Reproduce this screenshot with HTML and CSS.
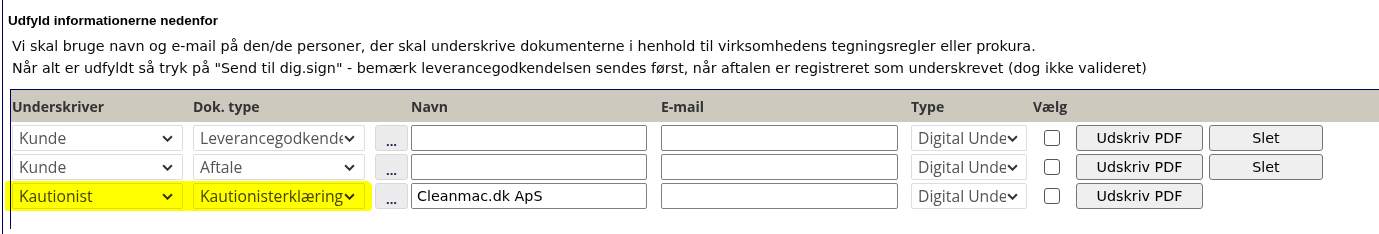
FILE: index.html
```html
<!DOCTYPE html>
<html lang="da">
<head>
  <meta charset="UTF-8" />
  <title>Underskrivere</title>
  <link rel="stylesheet" href="styles.css">
</head>
<body>
  <div class="frame">
    <div class="title">Udfyld informationerne nedenfor</div>
    <div class="intro">
      <p>Vi skal bruge navn og e-mail på den/de personer, der skal underskrive dokumenterne i henhold til virksomhedens tegningsregler eller prokura.</p>
      <p>Når alt er udfyldt så tryk på "Send til dig.sign" - bemærk leverancegodkendelsen sendes først, når aftalen er registreret som underskrevet (dog ikke valideret)</p>
    </div>

    <div class="signers">
      <div class="row head">
        <div>Underskriver</div>
        <div>Dok. type</div>
        <div></div>
        <div>Navn</div>
        <div>E-mail</div>
        <div>Type</div>
        <div>Vælg</div>
        <div></div>
        <div></div>
      </div>

      <div class="row">
        <div class="select w1"><span>Kunde</span><svg viewBox="0 0 10 6"><path d="M1 1l4 4 4-4"/></svg></div>
        <div class="select w2"><span>Leverancegodkendelse</span><svg viewBox="0 0 10 6"><path d="M1 1l4 4 4-4"/></svg></div>
        <button class="dots">...</button>
        <input class="text" type="text">
        <input class="text" type="text">
        <div class="select w3"><span>Digital Underskrift</span><svg viewBox="0 0 10 6"><path d="M1 1l4 4 4-4"/></svg></div>
        <div class="check"><input type="checkbox"></div>
        <button class="btn pdf">Udskriv PDF</button>
        <button class="btn del">Slet</button>
      </div>

      <div class="row">
        <div class="select w1"><span>Kunde</span><svg viewBox="0 0 10 6"><path d="M1 1l4 4 4-4"/></svg></div>
        <div class="select w2"><span>Aftale</span><svg viewBox="0 0 10 6"><path d="M1 1l4 4 4-4"/></svg></div>
        <button class="dots">...</button>
        <input class="text" type="text">
        <input class="text" type="text">
        <div class="select w3"><span>Digital Underskrift</span><svg viewBox="0 0 10 6"><path d="M1 1l4 4 4-4"/></svg></div>
        <div class="check"><input type="checkbox"></div>
        <button class="btn pdf">Udskriv PDF</button>
        <button class="btn del">Slet</button>
      </div>

      <div class="row marked">
        <div class="select w1 dark"><span>Kautionist</span><svg viewBox="0 0 10 6"><path d="M1 1l4 4 4-4"/></svg></div>
        <div class="select w2 dark"><span>Kautionisterklæring</span><svg viewBox="0 0 10 6"><path d="M1 1l4 4 4-4"/></svg></div>
        <button class="dots">...</button>
        <input class="text" type="text" value="Cleanmac.dk ApS">
        <input class="text" type="text">
        <div class="select w3"><span>Digital Underskrift</span><svg viewBox="0 0 10 6"><path d="M1 1l4 4 4-4"/></svg></div>
        <div class="check"><input type="checkbox"></div>
        <button class="btn pdf">Udskriv PDF</button>
        <div></div>
        <div class="highlight"></div>
      </div>
    </div>
  </div>
</body>
</html>
```

FILE: styles.css
```css
* { margin: 0; padding: 0; box-sizing: border-box; }

body {
  background: #fff;
  font-family: "DejaVu Sans", Verdana, sans-serif;
  font-size: 14.3px;
  color: #111;
  overflow: hidden;
}

.frame {
  margin-left: 2px;
  border-left: 1px solid #00005a;
  padding-left: 5px;
  min-height: 234px;
}

.title {
  padding-top: 11px;
  line-height: 20px;
  font-family: "Liberation Sans", Arial, sans-serif;
  font-size: 13.5px;
  font-weight: bold;
  color: #000;
}

.intro {
  margin-top: 4px;
  padding-left: 4px;
  line-height: 22px;
  color: #0a0a0a;
}

.signers {
  margin-top: 10px;
  margin-left: 2px;
  border-top: 1px solid #00005a;
  border-left: 1px solid #00005a;
  padding-left: 1px;
  min-height: 140px;
}

.row {
  display: grid;
  grid-template-columns: 181px 182px 36px 250px 250px 122px 43px 133px 114px;
  align-items: center;
  margin-top: 3px;
  height: 26px;
  position: relative;
}

.row.head {
  margin-top: 0;
  margin-left: -1px;
  padding-left: 1px;
  height: 32px;
  background: #cdc9be;
  font-family: "Open Sans", sans-serif;
  font-size: 14px;
  font-weight: bold;
  color: #333;
}

.select {
  display: flex;
  align-items: center;
  height: 26px;
  border: 1px solid #dedede;
  border-radius: 2px;
  background: #fff;
  padding: 0 9px 0 6px;
  font-family: "Open Sans", sans-serif;
  font-size: 15.7px;
  color: #555;
}

.select span {
  flex: 1;
  overflow: hidden;
  white-space: nowrap;
}

.select svg {
  width: 11px;
  height: 7px;
  margin-left: 1px;
  fill: none;
  stroke: #333;
  stroke-width: 1.8;
}

.select.dark { color: #444; }

.w1 { width: 171px; }
.w2 { width: 172px; }
.w3 { width: 116px; padding-right: 8px; }

.dots {
  width: 33px;
  height: 26px;
  border: 1px solid #d8d8d8;
  border-radius: 3px;
  background: #ececec;
  font-family: "Open Sans", sans-serif;
  font-size: 13px;
  font-weight: bold;
  color: #1a1a40;
  padding-top: 5px;
}

.text {
  width: 236px;
  height: 26px;
  border: 1px solid #808080;
  border-radius: 2px;
  padding: 0 5px;
  font-family: "DejaVu Sans", Verdana, sans-serif;
  font-size: 14.3px;
  color: #000;
  background: #fff;
}

.row .text:nth-of-type(2) { width: 237px; }

.check {
  padding-left: 11px;
  display: flex;
  align-items: center;
}

.check input {
  appearance: none;
  width: 16px;
  height: 16px;
  border: 1px solid #555;
  border-radius: 3px;
  background: #fff;
}

.btn {
  height: 26px;
  border: 1px solid #767676;
  border-radius: 3px;
  background: #efefef;
  font-family: "DejaVu Sans", Verdana, sans-serif;
  font-size: 14.3px;
  color: #000;
}

.pdf { width: 127px; }
.del { width: 114px; }

.highlight {
  position: absolute;
  left: -7px;
  top: -2px;
  width: 367px;
  height: 30px;
  background: #ffff00;
  mix-blend-mode: multiply;
  border-radius: 3px 6px 4px 2px;
  pointer-events: none;
}
```
